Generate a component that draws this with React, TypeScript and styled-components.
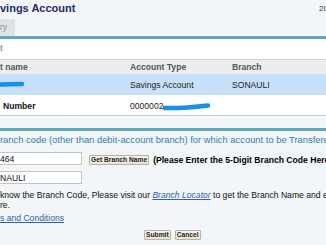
import React from 'react'
import styled, { createGlobalStyle, css } from 'styled-components'

const GlobalStyle = createGlobalStyle`
  html, body {
    margin: 0;
    padding: 0;
  }
  body {
    width: 326px;
    height: 245px;
    overflow: hidden;
    background: #f2f6f8;
    font-family: "Liberation Sans", Arial, sans-serif;
    font-size: 8.6px;
    color: #1a1a1a;
  }
`

const Page = styled.div`
  width: 326px;
  height: 245px;
  overflow: hidden;
  background: #f2f6f8;
  white-space: nowrap;
`

const Top = styled.div`
  height: 36px;
  display: flex;
  flex-direction: column;
`

const TitleRow = styled.div`
  display: flex;
  justify-content: space-between;
  padding-top: 2px;
  height: 13px;
`

const Title = styled.h1`
  margin: 0;
  font-size: 11px;
  line-height: 13px;
  font-weight: bold;
  color: #1d2a6c;
`

const Stamp = styled.span`
  width: 7px;
  font-size: 8px;
  line-height: 13px;
  color: #333;
  overflow: visible;
`

const Tab = styled.div`
  margin-top: auto;
  width: 15px;
  height: 17px;
  background: #dfe3e5;
  color: #8c9194;
  line-height: 17px;
`

const TealRule = styled.div<{ $gap?: number }>`
  height: 3px;
  background: #60a9b3;
  margin-top: ${p => p.$gap ?? 0}px;
`

const Panel = styled.div`
  background: #fff;
`

const SelectBar = styled.div`
  height: 20px;
  padding-top: 4px;
  box-sizing: border-box;
  line-height: 11px;
  color: #2b7aa0;
`

const Table = styled.div`
  border-top: 1px solid #cfd3d5;
  border-bottom: 1px solid #cbcfd1;
`

const Row = styled.div<{ $kind: 'head' | 'selected' | 'plain' }>`
  display: grid;
  grid-template-columns: 130px 102px 1fr;
  align-items: center;
  ${p =>
    p.$kind === 'head' &&
    css`
      height: 14px;
      background: #ededed;
      font-weight: bold;
      color: #4a5a5c;
    `}
  ${p =>
    p.$kind === 'selected' &&
    css`
      height: 21px;
      background: #c6e1f9;
      color: #222;
    `}
  ${p =>
    p.$kind === 'plain' &&
    css`
      height: 20px;
      padding-top: 2px;
      box-sizing: border-box;
      background: #fff;
      color: #222;
    `}
`

const Cell = styled.div<{ $inset?: number; $bold?: boolean }>`
  display: flex;
  align-items: center;
  padding-left: ${p => p.$inset ?? 0}px;
  font-weight: ${p => (p.$bold ? 'bold' : 'inherit')};
  color: ${p => (p.$bold ? '#111' : 'inherit')};
`

const SectionTitle = styled.div`
  padding-top: 3px;
  font-size: 9.4px;
  line-height: 11px;
  color: #2f7fa8;
`

const FieldRow = styled.div<{ $gap: number }>`
  display: flex;
  align-items: flex-end;
  margin-top: ${p => p.$gap}px;
`

const Field = styled.input`
  margin: 0 0 0 -4px;
  width: 86px;
  height: 13px;
  box-sizing: border-box;
  border: 1px solid #c3c6c8;
  background: #fff;
  padding: 0 0 0 3px;
  font-family: "Liberation Sans", Arial, sans-serif;
  font-size: 8.6px;
  color: #111;
  outline: none;
`

const Btn = styled.button<{ $gap?: number }>`
  margin: 0 0 0 ${p => p.$gap ?? 0}px;
  height: 10px;
  padding: 0 1px;
  box-sizing: border-box;
  border: 1px solid #b7b4a6;
  border-radius: 1px;
  background: linear-gradient(#f6f4ec, #e9e5d5);
  font-family: "Liberation Sans", Arial, sans-serif;
  font-size: 6.7px;
  font-weight: bold;
  line-height: 8px;
  color: #1e1e1e;
`

const Hint = styled.span`
  margin-left: 4px;
  font-weight: bold;
  line-height: 10px;
  color: #000;
`

const Para = styled.p`
  margin: 6px 0 0;
  line-height: 10px;
  color: #111;
`

const Link = styled.a<{ $italic?: boolean }>`
  color: #2f62ac;
  text-decoration: underline;
  font-style: ${p => (p.$italic ? 'italic' : 'normal')};
`

const Terms = styled.div`
  margin-top: 3px;
  line-height: 10px;
`

const Actions = styled.div`
  display: flex;
  gap: 4px;
  margin-top: 7px;
  padding-left: 144px;
`

const Redaction = ({ w, d }: { w: number; d: string }) => (
  <svg width={w} height="9" viewBox={`0 0 ${w} 9`}>
    <path d={d} stroke="#1a8fea" strokeWidth="4.5" strokeLinecap="round" fill="none" />
  </svg>
)

export default function App() {
  return (
    <Page>
      <GlobalStyle />
      <Top>
        <TitleRow>
          <Title>vings Account</Title>
          <Stamp>20</Stamp>
        </TitleRow>
        <Tab>ry</Tab>
      </Top>
      <TealRule />
      <Panel>
        <SelectBar>t</SelectBar>
        <Table>
          <Row $kind="head">
            <Cell>t name</Cell>
            <Cell>Account Type</Cell>
            <Cell>Branch</Cell>
          </Row>
          <Row $kind="selected">
            <Cell>
              <Redaction w={24} d="M0 4.5 L22 4" />
            </Cell>
            <Cell>Savings Account</Cell>
            <Cell>SONAULI</Cell>
          </Row>
          <Row $kind="plain">
            <Cell $inset={3} $bold>Number</Cell>
            <Cell>
              0000002
              <Redaction w={48} d="M1 6 Q 20 6.5 45 3.5" />
            </Cell>
            <Cell />
          </Row>
        </Table>
      </Panel>
      <TealRule $gap={12} />
      <SectionTitle>ranch code (other than debit-account branch) for which account to be Transfered</SectionTitle>
      <FieldRow $gap={7}>
        <Field readOnly value="464" />
        <Btn $gap={7}>Get Branch Name</Btn>
        <Hint>(Please Enter the 5-Digit Branch Code Here)</Hint>
      </FieldRow>
      <FieldRow $gap={6}>
        <Field readOnly value="NAULI" />
      </FieldRow>
      <Para>
        know the Branch Code, Please visit our <Link $italic>Branch Locator</Link> to get the Branch Name and enter it
        <br />
        re.
      </Para>
      <Terms>
        <Link>s and Conditions</Link>
      </Terms>
      <Actions>
        <Btn>Submit</Btn>
        <Btn>Cancel</Btn>
      </Actions>
    </Page>
  )
}
